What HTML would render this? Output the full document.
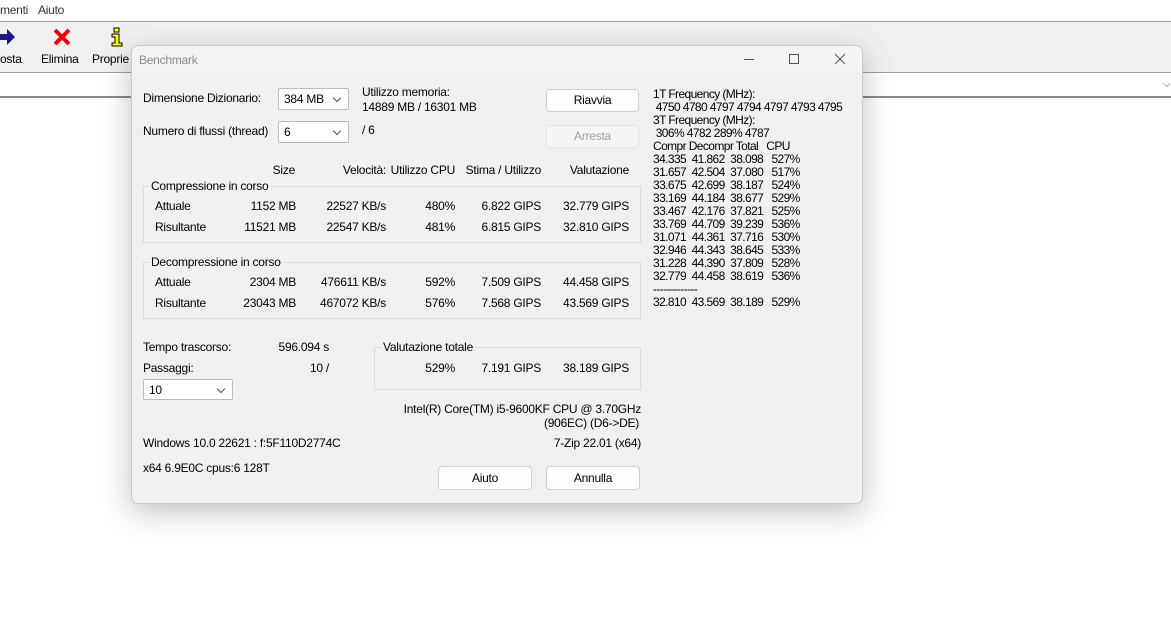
<!DOCTYPE html><html><head><meta charset="utf-8"><style>
*{margin:0;padding:0;box-sizing:border-box}
body{width:1171px;height:633px;overflow:hidden;background:#fff;font-family:"Liberation Sans",sans-serif;font-size:12px;color:#000;position:relative;letter-spacing:-0.25px}
.a{position:absolute;line-height:14px;white-space:nowrap}
.r{text-align:right}
.box{position:absolute;border:1px solid #dcdcdc}
.lbl{position:absolute;background:#f0f0f0;padding:0 2px;line-height:14px}
.btn{position:absolute;background:#fdfdfd;border:1px solid #d0d0d0;border-radius:4px;text-align:center;line-height:21px}
.cb{position:absolute;background:#fff;border:1px solid #bcbcbc;border-radius:2px;padding-left:5px;line-height:20px;font-size:12px}
.cb:after{content:"";position:absolute;right:8px;top:6px;width:5px;height:5px;border-right:1px solid #555;border-bottom:1px solid #555;transform:rotate(45deg)}
</style></head><body>
<div class="a" style="left:0;top:3px;color:#333;font-size:12px">menti</div>
<div class="a" style="left:38px;top:3px;color:#333">Aiuto</div>
<div style="position:absolute;left:0;top:21px;width:1171px;height:1px;background:#a0a0a0"></div>
<div style="position:absolute;left:0;top:22px;width:1171px;height:50px;background:#f0f0f0"></div>
<div style="position:absolute;left:0;top:72px;width:1171px;height:1px;background:#a0a0a0"></div>
<div style="position:absolute;left:0;top:96px;width:1171px;height:2px;background:#8a8a8a"></div>
<div class="a" style="left:1163px;top:78px;color:#555;font-size:10px">⌵</div>
<svg style="position:absolute;left:0;top:28px" width="18" height="18"><path d="M0 6h7V1l8 8-8 8v-5H0z" fill="#1a1a8c"/></svg>
<div class="a" style="left:0;top:52px">osta</div>
<svg style="position:absolute;left:53px;top:28px" width="18" height="18"><path d="M2 2L16 16M16 2L2 16" stroke="#e00" stroke-width="4"/></svg>
<div class="a" style="left:41px;top:52px">Elimina</div>
<svg style="position:absolute;left:110px;top:27px" width="14" height="20"><rect x="4" y="1" width="5" height="4" fill="#ff0" stroke="#000"/><path d="M2 7h7v9h3v3H2v-3h3v-6H2z" fill="#ff0" stroke="#000"/></svg>
<div class="a" style="left:92px;top:52px">Proprie</div>

<div style="position:absolute;left:131px;top:45px;width:732px;height:459px;background:#f0f0f0;border:1px solid #c8c8c8;border-radius:7px;box-shadow:0 8px 30px rgba(0,0,0,.25)"></div>
<div style="position:absolute;left:132px;top:46px;width:730px;height:27px;background:#f3f3f3;border-radius:7px 7px 0 0"></div>
<div class="a" style="left:139px;top:53px;color:#8a8a8a">Benchmark</div>
<div style="position:absolute;left:744px;top:59px;width:10px;height:1px;background:#555"></div>
<div style="position:absolute;left:789px;top:54px;width:10px;height:10px;border:1px solid #555"></div>
<svg style="position:absolute;left:834px;top:53px" width="12" height="12"><path d="M1 1L11 11M11 1L1 11" stroke="#555"/></svg>

<div class="a" style="left:143px;top:91px">Dimensione Dizionario:</div>
<div class="cb" style="left:278px;top:88px;width:71px;height:22px">384 MB</div>
<div class="a" style="left:362px;top:85px">Utilizzo memoria:</div>
<div class="a" style="left:362px;top:100px">14889 MB / 16301 MB</div>
<div class="btn" style="left:546px;top:89px;width:93px;height:23px">Riavvia</div>
<div class="btn" style="left:546px;top:125px;width:93px;height:23px;color:#a0a0a0;background:#f5f5f5;border-color:#e4e4e4">Arresta</div>
<div class="a" style="left:143px;top:124px">Numero di flussi (thread)</div>
<div class="cb" style="left:278px;top:121px;width:71px;height:22px">6</div>
<div class="a" style="left:362px;top:123px">/ 6</div>

<div class="a r" style="left:200px;top:163px;width:95px">Size</div>
<div class="a r" style="left:300px;top:163px;width:86px">Velocità:</div>
<div class="a r" style="left:380px;top:163px;width:75px">Utilizzo CPU</div>
<div class="a r" style="left:440px;top:163px;width:101px">Stima / Utilizzo</div>
<div class="a r" style="left:540px;top:163px;width:89px">Valutazione</div>

<div class="box" style="left:143px;top:186px;width:498px;height:57px"></div>
<div class="lbl" style="left:149px;top:179px">Compressione in corso</div>
<div class="box" style="left:143px;top:262px;width:498px;height:57px"></div>
<div class="lbl" style="left:149px;top:255px">Decompressione in corso</div>

<div class="a" style="left:155px;top:199px">Attuale</div><div class="a r" style="left:200px;top:199px;width:96px">1152 MB</div><div class="a r" style="left:300px;top:199px;width:86px">22527 KB/s</div><div class="a r" style="left:380px;top:199px;width:75px">480%</div><div class="a r" style="left:440px;top:199px;width:101px">6.822 GIPS</div><div class="a r" style="left:540px;top:199px;width:89px">32.779 GIPS</div>
<div class="a" style="left:155px;top:220px">Risultante</div><div class="a r" style="left:200px;top:220px;width:96px">11521 MB</div><div class="a r" style="left:300px;top:220px;width:86px">22547 KB/s</div><div class="a r" style="left:380px;top:220px;width:75px">481%</div><div class="a r" style="left:440px;top:220px;width:101px">6.815 GIPS</div><div class="a r" style="left:540px;top:220px;width:89px">32.810 GIPS</div>
<div class="a" style="left:155px;top:275px">Attuale</div><div class="a r" style="left:200px;top:275px;width:96px">2304 MB</div><div class="a r" style="left:300px;top:275px;width:86px">476611 KB/s</div><div class="a r" style="left:380px;top:275px;width:75px">592%</div><div class="a r" style="left:440px;top:275px;width:101px">7.509 GIPS</div><div class="a r" style="left:540px;top:275px;width:89px">44.458 GIPS</div>
<div class="a" style="left:155px;top:296px">Risultante</div><div class="a r" style="left:200px;top:296px;width:96px">23043 MB</div><div class="a r" style="left:300px;top:296px;width:86px">467072 KB/s</div><div class="a r" style="left:380px;top:296px;width:75px">576%</div><div class="a r" style="left:440px;top:296px;width:101px">7.568 GIPS</div><div class="a r" style="left:540px;top:296px;width:89px">43.569 GIPS</div>

<div class="a" style="left:143px;top:340px">Tempo trascorso:</div>
<div class="a r" style="left:228px;top:340px;width:101px">596.094 s</div>
<div class="a" style="left:143px;top:361px">Passaggi:</div>
<div class="a r" style="left:228px;top:361px;width:101px">10 /</div>
<div class="cb" style="left:143px;top:379px;width:90px;height:21px">10</div>

<div class="box" style="left:374px;top:347px;width:267px;height:43px"></div>
<div class="lbl" style="left:381px;top:340px">Valutazione totale</div>
<div class="a r" style="left:380px;top:361px;width:75px">529%</div>
<div class="a r" style="left:440px;top:361px;width:101px">7.191 GIPS</div>
<div class="a r" style="left:540px;top:361px;width:89px">38.189 GIPS</div>

<div class="a r" style="left:340px;top:402px;width:301px">Intel(R) Core(TM) i5-9600KF CPU @ 3.70GHz</div>
<div class="a r" style="left:340px;top:416px;width:299px">(906EC) (D6-&gt;DE)</div>
<div class="a" style="left:143px;top:436px">Windows 10.0 22621 : f:5F110D2774C</div>
<div class="a r" style="left:440px;top:436px;width:201px">7-Zip 22.01 (x64)</div>
<div class="a" style="left:143px;top:461px">x64 6.9E0C cpus:6 128T</div>
<div class="btn" style="left:438px;top:466px;width:94px;height:24px;line-height:22px">Aiuto</div>
<div class="btn" style="left:546px;top:466px;width:94px;height:24px;line-height:22px">Annulla</div>

<div class="a" style="left:653px;top:88px;line-height:13px;white-space:pre;letter-spacing:-0.6px">1T Frequency (MHz):
 4750 4780 4797 4794 4797 4793 4795
3T Frequency (MHz):
 306% 4782 289% 4787
Compr Decompr Total   CPU
34.335  41.862  38.098   527%
31.657  42.504  37.080   517%
33.675  42.699  38.187   524%
33.169  44.184  38.677   529%
33.467  42.176  37.821   525%
33.769  44.709  39.239   536%
31.071  44.361  37.716   530%
32.946  44.343  38.645   533%
31.228  44.390  37.809   528%
32.779  44.458  38.619   536%
-------------
32.810  43.569  38.189   529%</div>
</body></html>
